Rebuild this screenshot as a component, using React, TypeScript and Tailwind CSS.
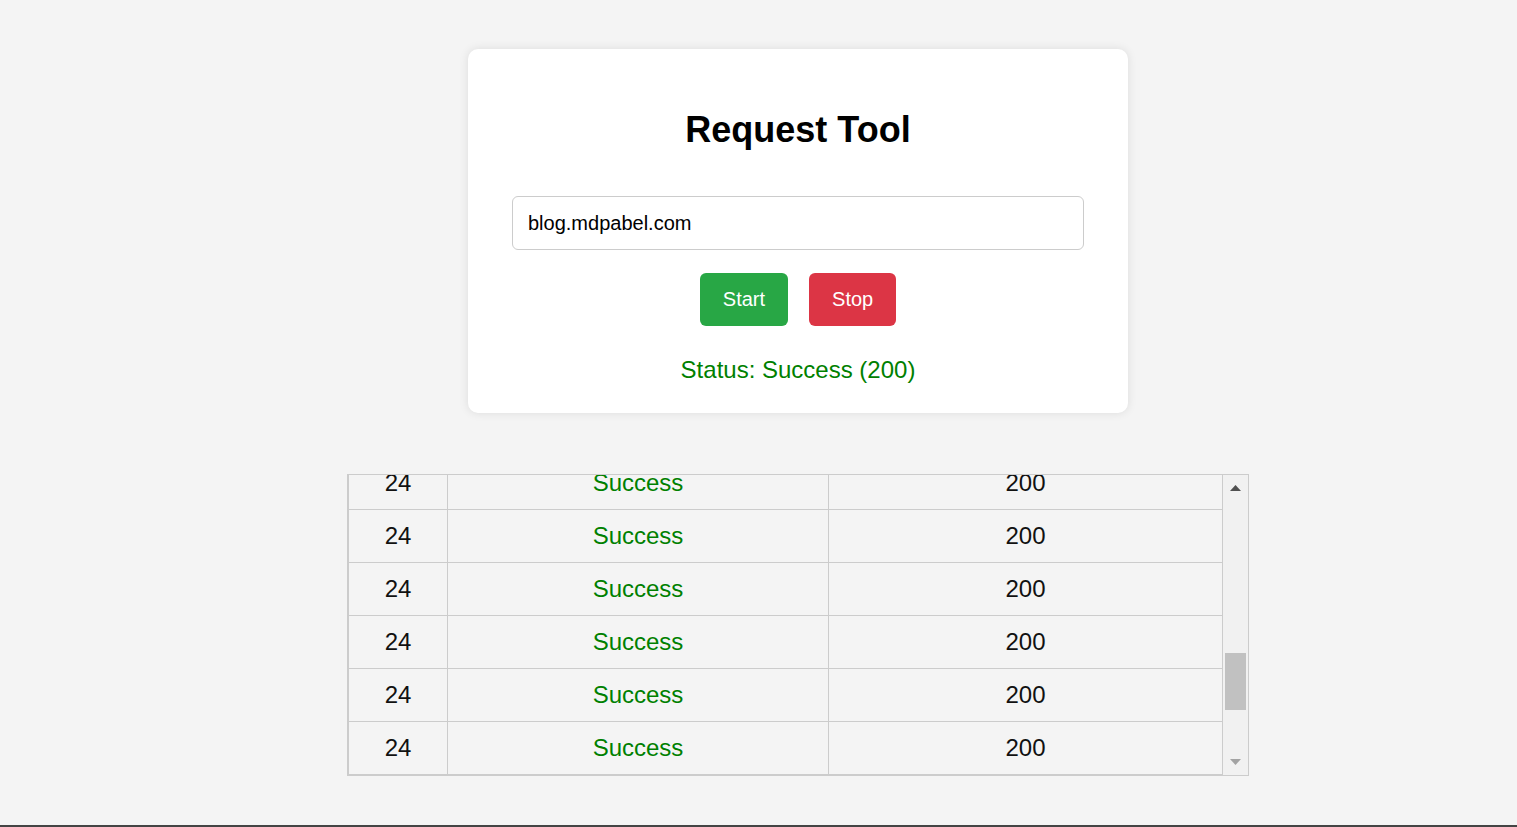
import { useState } from 'react';

type LogRow = {
  count: number;
  status: string;
  code: number;
};

// only the tail of the log is visible, the list is pinned to the bottom
const rows: LogRow[] = Array.from({ length: 6 }, () => ({ count: 24, status: 'Success', code: 200 }));

function FakeScrollbar() {
  return (
    <div className="flex h-full w-[25px] shrink-0 flex-col bg-[#f1f1f1]">
      <div className="flex h-[25px] items-center justify-center">
        <svg width="11" height="6" viewBox="0 0 11 6" aria-hidden>
          <path d="M0 6 L5.5 0 L11 6 Z" fill="#505050" />
        </svg>
      </div>
      <div className="flex-1 px-[2px]">
        <div className="mt-[153px] h-[57px] bg-[#c1c1c1]" />
      </div>
      <div className="flex h-[25px] items-center justify-center pb-[1px]">
        <svg width="11" height="6" viewBox="0 0 11 6" aria-hidden>
          <path d="M0 0 L11 0 L5.5 6 Z" fill="#a3a3a3" />
        </svg>
      </div>
    </div>
  );
}

export default function App() {
  const [url, setUrl] = useState('blog.mdpabel.com');

  return (
    <div className="flex h-[827px] flex-col bg-[#f4f4f4] font-['Liberation_Sans',Arial,sans-serif] text-black">
      <main className="flex flex-col items-center pl-[79px] pt-[49px]">
        <section className="w-[660px] rounded-[10px] bg-white px-[44px] pb-[29px] pt-[60px] shadow-[0_0_10px_rgba(0,0,0,0.1)]">
          <h1 className="text-center text-[36px] font-bold leading-[41px]">Request Tool</h1>
          <input
            type="text"
            value={url}
            onChange={(e) => setUrl(e.target.value)}
            className="mt-[46px] h-[54px] w-full rounded-[6px] border border-[#cccccc] px-[15px] text-[20px] leading-[23px] text-black outline-none"
          />
          <div className="mt-[23px] flex justify-center gap-[21px]">
            <button
              type="button"
              className="h-[53px] rounded-[6px] bg-[#28a745] px-[23px] pb-[2px] text-[20px] text-white"
            >
              Start
            </button>
            <button
              type="button"
              className="h-[53px] rounded-[6px] bg-[#dc3545] px-[23px] pb-[2px] text-[20px] text-white"
            >
              Stop
            </button>
          </div>
          <p className="mt-[30px] text-center text-[24px] leading-[28px] text-[#008000]">Status: Success (200)</p>
        </section>

        <div className="mt-[61px] flex h-[302px] w-[902px] border border-[#cccccc] bg-[#f4f4f4]">
          <div className="flex h-full flex-1 flex-col justify-end overflow-hidden">
            {rows.map((row, i) => (
              <div key={i} className="flex h-[53px] shrink-0 border-b border-l border-[#cccccc] text-[24px]">
                <div className="flex w-[99px] items-center justify-center border-r border-[#cccccc] text-[#111]">
                  {row.count}
                </div>
                <div className="flex w-[381px] items-center justify-center border-r border-[#cccccc] text-[#008000]">
                  {row.status}
                </div>
                <div className="flex flex-1 items-center justify-center border-r border-[#cccccc] text-[#111]">
                  {row.code}
                </div>
              </div>
            ))}
          </div>
          <FakeScrollbar />
        </div>
      </main>
      <div className="mt-auto h-[2px] w-full bg-[#444444]" />
    </div>
  );
}
